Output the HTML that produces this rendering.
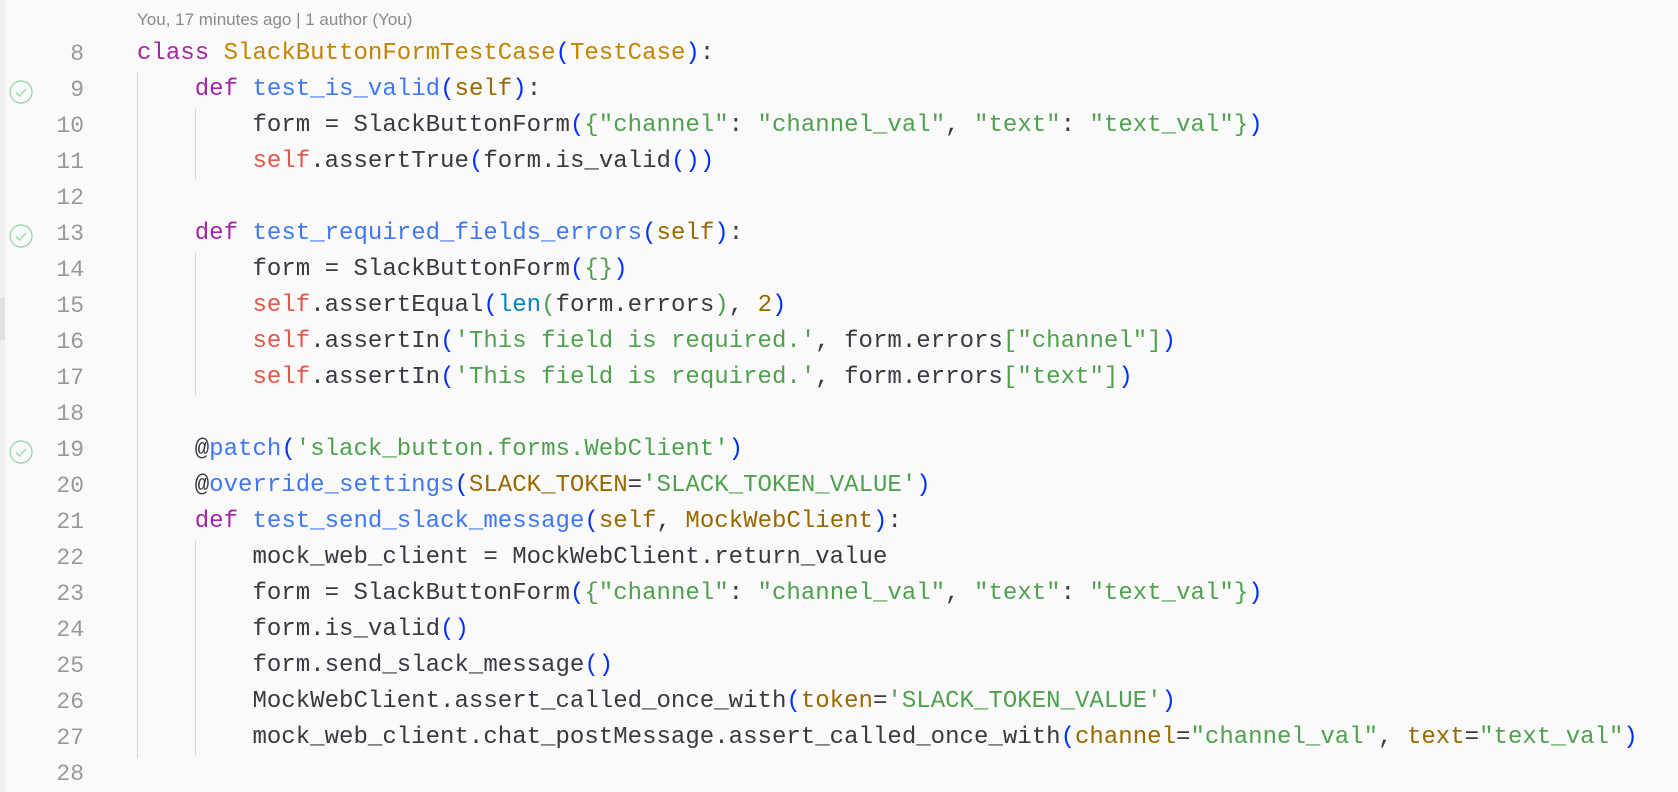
<!DOCTYPE html>
<html><head><style>
body{margin:0;width:1678px;height:792px;background:#fafafa;overflow:hidden;position:relative;font-family:"Liberation Mono",monospace}
.hdr{position:absolute;left:137px;top:10px;font:17px "Liberation Sans",sans-serif;color:#8a8a8a}
.ln{position:absolute;left:0;width:84px;text-align:right;font-size:23px;color:#999;line-height:36px}
.code{position:absolute;left:137px;font-size:24.05px;color:#383a42;line-height:36px;white-space:pre}
.k{color:#a626a4}.c{color:#c18401}.f{color:#4078f2}.s{color:#50a14f}.r{color:#e45649}.p{color:#986801}.b{color:#0431fa}.bi{color:#0184bc}
.g{position:absolute;width:1px;background:#d8d8d8}
.chk{position:absolute;left:9px;width:24px;height:24px}
.sb{position:absolute;left:0;top:0;width:5px;height:792px;background:#f0f0f0}
</style></head><body>
<div class="sb"></div>
<div style="position:absolute;left:0;top:298px;width:5px;height:42px;background:#e2e2e2"></div>
<div class="hdr">You, 17 minutes ago | 1 author (You)</div>
<div class="g" style="left:137px;top:72px;height:686px"></div>
<div class="g" style="left:195px;top:108px;height:72px"></div>
<div class="g" style="left:195px;top:252px;height:144px"></div>
<div class="g" style="left:195px;top:540px;height:216px"></div>
<svg class="chk" style="top:80px" viewBox="0 0 24 24"><circle cx="12" cy="12" r="11" fill="none" stroke="#9fd7ae" stroke-width="1.4"/><path d="M7 12.5l3.5 3.5 6.5-7" fill="none" stroke="#9fd7ae" stroke-width="1.4"/></svg>
<svg class="chk" style="top:224px" viewBox="0 0 24 24"><circle cx="12" cy="12" r="11" fill="none" stroke="#9fd7ae" stroke-width="1.4"/><path d="M7 12.5l3.5 3.5 6.5-7" fill="none" stroke="#9fd7ae" stroke-width="1.4"/></svg>
<svg class="chk" style="top:440px" viewBox="0 0 24 24"><circle cx="12" cy="12" r="11" fill="none" stroke="#9fd7ae" stroke-width="1.4"/><path d="M7 12.5l3.5 3.5 6.5-7" fill="none" stroke="#9fd7ae" stroke-width="1.4"/></svg>
<div class="ln" style="top:36px">8<br>9<br>10<br>11<br>12<br>13<br>14<br>15<br>16<br>17<br>18<br>19<br>20<br>21<br>22<br>23<br>24<br>25<br>26<br>27<br>28</div>
<div class="code" style="top:36px"><span class="k">class</span> <span class="c">SlackButtonFormTestCase</span><span class="b">(</span><span class="c">TestCase</span><span class="b">)</span>:
    <span class="k">def</span> <span class="f">test_is_valid</span><span class="b">(</span><span class="p">self</span><span class="b">)</span>:
        form = SlackButtonForm<span class="b">(</span><span class="s">{</span><span class="s">"channel"</span>: <span class="s">"channel_val"</span>, <span class="s">"text"</span>: <span class="s">"text_val"</span><span class="s">}</span><span class="b">)</span>
        <span class="r">self</span>.assertTrue<span class="b">(</span>form.is_valid<span class="b">())</span>

    <span class="k">def</span> <span class="f">test_required_fields_errors</span><span class="b">(</span><span class="p">self</span><span class="b">)</span>:
        form = SlackButtonForm<span class="b">(</span><span class="s">{}</span><span class="b">)</span>
        <span class="r">self</span>.assertEqual<span class="b">(</span><span class="bi">len</span><span class="s">(</span>form.errors<span class="s">)</span>, <span class="p">2</span><span class="b">)</span>
        <span class="r">self</span>.assertIn<span class="b">(</span><span class="s">'This field is required.'</span>, form.errors<span class="s">[</span><span class="s">"channel"</span><span class="s">]</span><span class="b">)</span>
        <span class="r">self</span>.assertIn<span class="b">(</span><span class="s">'This field is required.'</span>, form.errors<span class="s">[</span><span class="s">"text"</span><span class="s">]</span><span class="b">)</span>

    @<span class="f">patch</span><span class="b">(</span><span class="s">'slack_button.forms.WebClient'</span><span class="b">)</span>
    @<span class="f">override_settings</span><span class="b">(</span><span class="p">SLACK_TOKEN</span>=<span class="s">'SLACK_TOKEN_VALUE'</span><span class="b">)</span>
    <span class="k">def</span> <span class="f">test_send_slack_message</span><span class="b">(</span><span class="p">self</span>, <span class="p">MockWebClient</span><span class="b">)</span>:
        mock_web_client = MockWebClient.return_value
        form = SlackButtonForm<span class="b">(</span><span class="s">{</span><span class="s">"channel"</span>: <span class="s">"channel_val"</span>, <span class="s">"text"</span>: <span class="s">"text_val"</span><span class="s">}</span><span class="b">)</span>
        form.is_valid<span class="b">()</span>
        form.send_slack_message<span class="b">()</span>
        MockWebClient.assert_called_once_with<span class="b">(</span><span class="p">token</span>=<span class="s">'SLACK_TOKEN_VALUE'</span><span class="b">)</span>
        mock_web_client.chat_postMessage.assert_called_once_with<span class="b">(</span><span class="p">channel</span>=<span class="s">"channel_val"</span>, <span class="p">text</span>=<span class="s">"text_val"</span><span class="b">)</span>
</div>
</body></html>
